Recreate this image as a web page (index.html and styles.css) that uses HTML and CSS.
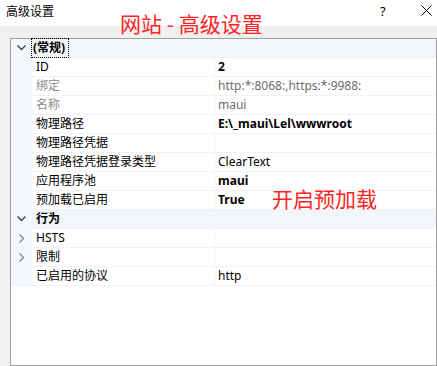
FILE: index.html
```html
<!DOCTYPE html>
<html lang="zh-CN">
<head>
  <meta charset="UTF-8">
  <title>高级设置</title>
  <link rel="stylesheet" href="styles.css">
</head>
<body>

<!-- 标题栏 -->
<div class="titlebar">
  <span class="title">高级设置</span>
  <span class="help">?</span>
  <span class="close">
    <svg width="11" height="11" viewBox="0 0 11 11"><path d="M0.5 0.5 L10.5 10.5 M10.5 0.5 L0.5 10.5" stroke="#000" stroke-width="1" fill="none"/></svg>
  </span>
</div>

<!-- 属性网格 -->
<div class="body">
  <div class="grid">
    <div class="row cat">
      <span class="gutter"><svg class="chev" width="9" height="6" viewBox="0 0 9 6"><path d="M0.5 0.5 L4.5 4.5 L8.5 0.5" stroke="#444" stroke-width="1.4" fill="none"/></svg></span>
      <span class="name"><span class="focus">(常规)</span></span>
    </div>
    <div class="row"><span class="gutter"></span><span class="name">ID</span><span class="value bold">2</span></div>
    <div class="row dim"><span class="gutter"></span><span class="name">绑定</span><span class="value">http:*:8068:,https:*:9988:</span></div>
    <div class="row dim"><span class="gutter"></span><span class="name">名称</span><span class="value">maui</span></div>
    <div class="row"><span class="gutter"></span><span class="name">物理路径</span><span class="value bold">E:\_maui\Lel\wwwroot</span></div>
    <div class="row"><span class="gutter"></span><span class="name">物理路径凭据</span><span class="value"></span></div>
    <div class="row"><span class="gutter"></span><span class="name">物理路径凭据登录类型</span><span class="value">ClearText</span></div>
    <div class="row"><span class="gutter"></span><span class="name">应用程序池</span><span class="value bold">maui</span></div>
    <div class="row"><span class="gutter"></span><span class="name">预加载已启用</span><span class="value bold">True</span></div>
    <div class="row cat">
      <span class="gutter"><svg class="chev" width="9" height="6" viewBox="0 0 9 6"><path d="M0.5 0.5 L4.5 4.5 L8.5 0.5" stroke="#444" stroke-width="1.4" fill="none"/></svg></span>
      <span class="name">行为</span>
    </div>
    <div class="row">
      <span class="gutter"><svg class="chev" width="6" height="9" viewBox="0 0 6 9"><path d="M0.5 0.5 L4.5 4.5 L0.5 8.5" stroke="#888" stroke-width="1.3" fill="none"/></svg></span>
      <span class="name">HSTS</span><span class="value"></span>
    </div>
    <div class="row">
      <span class="gutter"><svg class="chev" width="6" height="9" viewBox="0 0 6 9"><path d="M0.5 0.5 L4.5 4.5 L0.5 8.5" stroke="#888" stroke-width="1.3" fill="none"/></svg></span>
      <span class="name">限制</span><span class="value"></span>
    </div>
    <div class="row"><span class="gutter"></span><span class="name">已启用的协议</span><span class="value">http</span></div>
  </div>
</div>

<!-- 红色标注 -->
<div class="note note-title">网站 - 高级设置</div>
<div class="note note-preload">开启预加载</div>

</body>
</html>
```

FILE: styles.css
```css
* {
  margin: 0; padding: 0; box-sizing: border-box;
}
body {
  font-family: "Noto Sans", "Noto Sans CJK SC", sans-serif;
  font-size: 12px;
  background-color: #f0f0f0;
  width: 437px;
  height: 366px;
  overflow: hidden;
  position: relative;
}

/* 标题栏 */
.titlebar {
  height: 26px;
  background: #fff;
  display: flex;
  align-items: center;
  padding: 0 5px 0 6px;
  color: #000;
}
.titlebar .title {
  flex: 1;
  margin-top: -5px;
}
.titlebar .help {
  width: 12px;
  margin-right: 29px;
  margin-top: -4px;
  font-size: 13px;
}
.titlebar .close {
  display: flex;
  margin-top: -5px;
}

/* 网格 */
.body {
  padding: 12px 0 0 10px;
}
.grid {
  border: 1px solid #a0a0a0;
  background: #fff;
  height: 328px;
}
.row {
  display: flex;
  height: 19px;
  border-bottom: 1px solid #f0f2f6;
  line-height: 18px;
  color: #000;
}
.gutter {
  width: 21px;
  background: #f3f6fb;
  display: flex;
  align-items: center;
  justify-content: center;
}
.name {
  width: 183px;
  padding-left: 4px;
  border-right: 1px solid #f0f2f6;
  white-space: nowrap;
}
.value {
  flex: 1;
  padding-left: 3px;
  white-space: nowrap;
}
.bold {
  font-weight: bold;
}
.dim .name {
  color: #8d8d8d;
}
.dim .value {
  color: #6d6d6d;
}

.row.cat {
  background: #f3f6fb;
  font-weight: bold;
}
.row.cat .name {
  border-right: none;
  flex: 1;
}
.focus {
  display: inline-block;
  outline: 1px dotted #000;
  padding: 0 3px 0 1px;
  margin-left: -4px;
  height: 18px;
}

/* 标注 */
.note {
  position: absolute;
  color: #ff2424;
  font-family: "Noto Sans CJK SC", sans-serif;
  font-size: 21px;
  line-height: 1;
}
.note-title {
  left: 120px;
  top: 13px;
}
.note-preload {
  left: 272px;
  top: 188px;
}
```
